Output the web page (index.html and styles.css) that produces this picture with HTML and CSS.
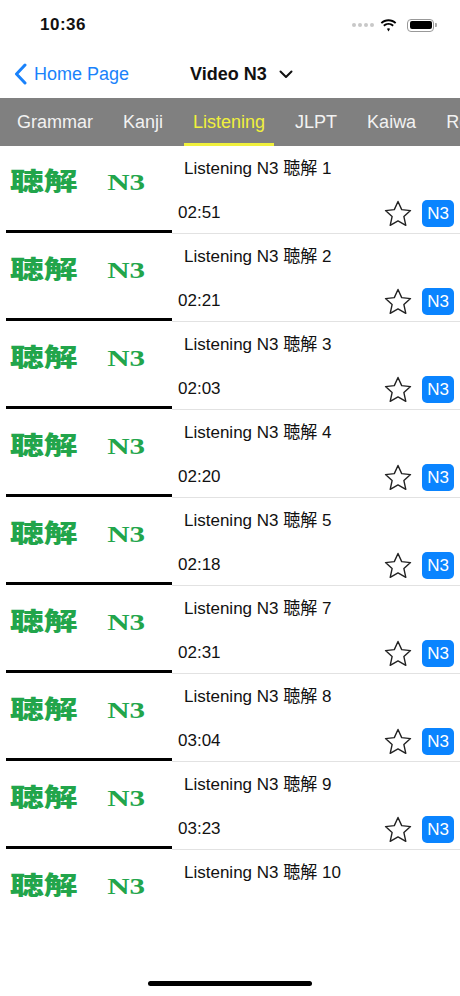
FILE: index.html
```html
<!DOCTYPE html>
<html lang="en">
<head>
<meta charset="UTF-8">
<meta name="viewport" content="width=device-width, initial-scale=1.0">
<title>Video N3</title>
<link rel="stylesheet" href="styles.css">
</head>
<body>

<div class="status-bar">
  <span class="clock">10:36</span>
  <div class="status-icons">
    <span class="signal"><i></i><i></i><i></i><i></i></span>
    <svg class="wifi" width="17" height="13" viewBox="0 0 17 13">
      <path d="M8.5 2.2c2.5 0 4.8 1 6.5 2.6l1.3-1.4C14.2 1.4 11.5.2 8.5.2S2.8 1.4.7 3.4L2 4.8c1.7-1.6 4-2.6 6.5-2.6z" fill="#000"/>
      <path d="M8.5 5.8c1.5 0 2.9.6 4 1.6l1.3-1.4c-1.4-1.3-3.3-2.1-5.3-2.1S4.6 4.7 3.2 6l1.3 1.4c1.1-1 2.5-1.6 4-1.6z" fill="#000"/>
      <path d="M8.5 9.2c.6 0 1.2.2 1.6.6L8.5 12.6 6.9 9.8c.4-.4 1-.6 1.6-.6z" fill="#000"/>
    </svg>
    <span class="battery"><span class="level"></span></span>
  </div>
</div>

<div class="nav-bar">
  <div class="back">
    <svg width="13" height="22" viewBox="0 0 13 22">
      <path d="M11 2L2.5 11 11 20" fill="none" stroke="#1a82fb" stroke-width="3" stroke-linecap="round" stroke-linejoin="round"/>
    </svg>
    <span>Home Page</span>
  </div>
  <div class="nav-title">
    <span>Video N3</span>
    <svg width="14" height="9" viewBox="0 0 14 9">
      <path d="M1.5 1.5L7 7l5.5-5.5" fill="none" stroke="#111" stroke-width="2" stroke-linecap="round" stroke-linejoin="round"/>
    </svg>
  </div>
</div>

<div class="tabs">
  <span class="tab">Grammar</span>
  <span class="tab">Kanji</span>
  <span class="tab active">Listening</span>
  <span class="tab">JLPT</span>
  <span class="tab">Kaiwa</span>
  <span class="tab">Reading</span>
</div>

<div class="list">
  <div class="row">
    <div class="thumb"><div class="label"><span class="kanji">聴解</span><span class="level-text">N3</span></div></div>
    <div class="info">
      <div class="title">Listening N3 聴解 1</div>
      <div class="meta">
        <span class="time">02:51</span>
        <svg class="star" width="28" height="27" viewBox="0 0 28 27"><path d="M14 1.5l3.7 8.1 8.8 1-6.6 6 1.9 8.7L14 20.9l-7.8 4.4 1.9-8.7-6.6-6 8.8-1z" fill="none" stroke="#222" stroke-width="1.4" stroke-linejoin="round"/></svg>
        <span class="badge">N3</span>
      </div>
    </div>
  </div>
  <div class="row">
    <div class="thumb"><div class="label"><span class="kanji">聴解</span><span class="level-text">N3</span></div></div>
    <div class="info">
      <div class="title">Listening N3 聴解 2</div>
      <div class="meta">
        <span class="time">02:21</span>
        <svg class="star" width="28" height="27" viewBox="0 0 28 27"><path d="M14 1.5l3.7 8.1 8.8 1-6.6 6 1.9 8.7L14 20.9l-7.8 4.4 1.9-8.7-6.6-6 8.8-1z" fill="none" stroke="#222" stroke-width="1.4" stroke-linejoin="round"/></svg>
        <span class="badge">N3</span>
      </div>
    </div>
  </div>
  <div class="row">
    <div class="thumb"><div class="label"><span class="kanji">聴解</span><span class="level-text">N3</span></div></div>
    <div class="info">
      <div class="title">Listening N3 聴解 3</div>
      <div class="meta">
        <span class="time">02:03</span>
        <svg class="star" width="28" height="27" viewBox="0 0 28 27"><path d="M14 1.5l3.7 8.1 8.8 1-6.6 6 1.9 8.7L14 20.9l-7.8 4.4 1.9-8.7-6.6-6 8.8-1z" fill="none" stroke="#222" stroke-width="1.4" stroke-linejoin="round"/></svg>
        <span class="badge">N3</span>
      </div>
    </div>
  </div>
  <div class="row">
    <div class="thumb"><div class="label"><span class="kanji">聴解</span><span class="level-text">N3</span></div></div>
    <div class="info">
      <div class="title">Listening N3 聴解 4</div>
      <div class="meta">
        <span class="time">02:20</span>
        <svg class="star" width="28" height="27" viewBox="0 0 28 27"><path d="M14 1.5l3.7 8.1 8.8 1-6.6 6 1.9 8.7L14 20.9l-7.8 4.4 1.9-8.7-6.6-6 8.8-1z" fill="none" stroke="#222" stroke-width="1.4" stroke-linejoin="round"/></svg>
        <span class="badge">N3</span>
      </div>
    </div>
  </div>
  <div class="row">
    <div class="thumb"><div class="label"><span class="kanji">聴解</span><span class="level-text">N3</span></div></div>
    <div class="info">
      <div class="title">Listening N3 聴解 5</div>
      <div class="meta">
        <span class="time">02:18</span>
        <svg class="star" width="28" height="27" viewBox="0 0 28 27"><path d="M14 1.5l3.7 8.1 8.8 1-6.6 6 1.9 8.7L14 20.9l-7.8 4.4 1.9-8.7-6.6-6 8.8-1z" fill="none" stroke="#222" stroke-width="1.4" stroke-linejoin="round"/></svg>
        <span class="badge">N3</span>
      </div>
    </div>
  </div>
  <div class="row">
    <div class="thumb"><div class="label"><span class="kanji">聴解</span><span class="level-text">N3</span></div></div>
    <div class="info">
      <div class="title">Listening N3 聴解 7</div>
      <div class="meta">
        <span class="time">02:31</span>
        <svg class="star" width="28" height="27" viewBox="0 0 28 27"><path d="M14 1.5l3.7 8.1 8.8 1-6.6 6 1.9 8.7L14 20.9l-7.8 4.4 1.9-8.7-6.6-6 8.8-1z" fill="none" stroke="#222" stroke-width="1.4" stroke-linejoin="round"/></svg>
        <span class="badge">N3</span>
      </div>
    </div>
  </div>
  <div class="row">
    <div class="thumb"><div class="label"><span class="kanji">聴解</span><span class="level-text">N3</span></div></div>
    <div class="info">
      <div class="title">Listening N3 聴解 8</div>
      <div class="meta">
        <span class="time">03:04</span>
        <svg class="star" width="28" height="27" viewBox="0 0 28 27"><path d="M14 1.5l3.7 8.1 8.8 1-6.6 6 1.9 8.7L14 20.9l-7.8 4.4 1.9-8.7-6.6-6 8.8-1z" fill="none" stroke="#222" stroke-width="1.4" stroke-linejoin="round"/></svg>
        <span class="badge">N3</span>
      </div>
    </div>
  </div>
  <div class="row">
    <div class="thumb"><div class="label"><span class="kanji">聴解</span><span class="level-text">N3</span></div></div>
    <div class="info">
      <div class="title">Listening N3 聴解 9</div>
      <div class="meta">
        <span class="time">03:23</span>
        <svg class="star" width="28" height="27" viewBox="0 0 28 27"><path d="M14 1.5l3.7 8.1 8.8 1-6.6 6 1.9 8.7L14 20.9l-7.8 4.4 1.9-8.7-6.6-6 8.8-1z" fill="none" stroke="#222" stroke-width="1.4" stroke-linejoin="round"/></svg>
        <span class="badge">N3</span>
      </div>
    </div>
  </div>
  <div class="row last">
    <div class="thumb"><div class="label"><span class="kanji">聴解</span><span class="level-text">N3</span></div></div>
    <div class="info">
      <div class="title">Listening N3 聴解 10</div>
    </div>
  </div>
</div>

<div class="home-indicator"></div>

</body>
</html>
```

FILE: styles.css
```css
* {
  box-sizing: border-box;
}
body {
  font-family: "Liberation Sans", "Noto Sans CJK JP", sans-serif;
  margin: 0;
  padding: 0;
  width: 460px;
  height: 996px;
  background: #fff;
  color: #111;
  position: relative;
  overflow: hidden;
}
.status-bar {
  height: 50px;
  display: flex;
  align-items: center;
  justify-content: space-between;
  padding: 0 26px 0 40px;
}
.clock {
  font-size: 17px;
  font-weight: bold;
  letter-spacing: 0.5px;
}
.status-icons {
  display: flex;
  align-items: center;
  gap: 6px;
}
.signal {
  display: flex;
  gap: 2px;
}
.signal i {
  width: 4px;
  height: 4px;
  border-radius: 50%;
  background: #c8c8c8;
}
.battery {
  width: 27px;
  height: 13px;
  border: 1.5px solid #999;
  border-radius: 4px;
  padding: 1.5px;
  position: relative;
  margin-left: 4px;
}
.battery::after {
  content: "";
  position: absolute;
  right: -4px;
  top: 3px;
  width: 2px;
  height: 4px;
  background: #aaa;
  border-radius: 0 1px 1px 0;
}
.battery .level {
  display: block;
  height: 100%;
  background: #000;
  border-radius: 2px;
}
.nav-bar {
  height: 48px;
  display: flex;
  align-items: center;
}
.back {
  width: 190px;
  display: flex;
  align-items: center;
  gap: 7px;
  padding-left: 14px;
  color: #1a82fb;
  font-size: 18px;
}
.nav-title {
  display: flex;
  align-items: center;
  gap: 12px;
  font-size: 18px;
  font-weight: bold;
}
.tabs {
  height: 48px;
  background: #808080;
  display: flex;
  gap: 12px;
  padding-left: 8px;
  white-space: nowrap;
  overflow: hidden;
}
.tab {
  padding: 3px 9px 0;
  font-size: 18px;
  line-height: 42px;
  color: #f2f2f2;
  border-bottom: 3px solid transparent;
}
.tab.active {
  color: #f0f03c;
  border-bottom-color: #f0f03c;
}
.row {
  display: flex;
  height: 88px;
}
.thumb {
  width: 166px;
  margin-left: 6px;
  border-bottom: 3px solid #000;
  margin-bottom: 1px;
  padding: 17px 0 0 4px;
  color: #22a54b;
  font-weight: bold;
}
.label {
  display: flex;
  align-items: baseline;
  transform: scaleX(1.35);
  transform-origin: left center;
}
.kanji {
  font-family: "Noto Sans CJK JP", sans-serif;
  font-size: 25px;
  font-weight: 900;
  line-height: 32px;
  width: 72px;
}
.level-text {
  font-family: "Liberation Serif", serif;
  font-size: 23px;
  line-height: 32px;
}
.row.last .thumb {
  border-bottom-color: transparent;
}
.info {
  flex: 1;
  border-bottom: 1px solid #e2e2e2;
  padding-top: 13px;
}
.row.last .info {
  border-bottom: none;
}
.title {
  font-size: 17px;
  line-height: 20px;
  padding-left: 12px;
}
.meta {
  display: flex;
  align-items: center;
  height: 28px;
  margin-top: 20px;
  padding: 0 6px;
}
.time {
  font-size: 17px;
  flex: 1;
}
.star {
  margin-right: 10px;
}
.badge {
  width: 32px;
  height: 27px;
  border-radius: 5px;
  background: #0a84ff;
  color: #fff;
  font-size: 17px;
  text-align: center;
  line-height: 27px;
}
.home-indicator {
  position: absolute;
  left: 148px;
  bottom: 10px;
  width: 164px;
  height: 5px;
  border-radius: 3px;
  background: #000;
}
```
